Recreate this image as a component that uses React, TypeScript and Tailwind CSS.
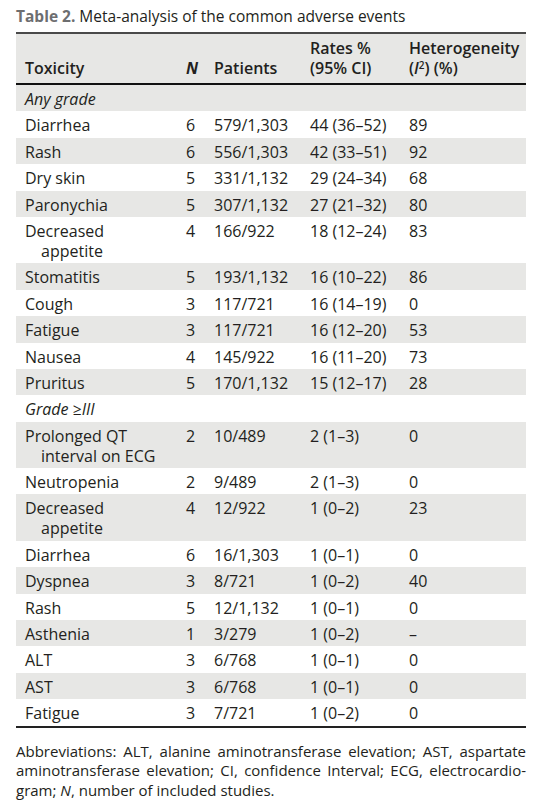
const font = { fontFamily: '"Open Sans", "Noto Sans", sans-serif' };

type Row = [string | string[], string, string, string, string];

const anyGrade: Row[] = [
  ['Diarrhea', '6', '579/1,303', '44 (36–52)', '89'],
  ['Rash', '6', '556/1,303', '42 (33–51)', '92'],
  ['Dry skin', '5', '331/1,132', '29 (24–34)', '68'],
  ['Paronychia', '5', '307/1,132', '27 (21–32)', '80'],
  [['Decreased', 'appetite'], '4', '166/922', '18 (12–24)', '83'],
  ['Stomatitis', '5', '193/1,132', '16 (10–22)', '86'],
  ['Cough', '3', '117/721', '16 (14–19)', '0'],
  ['Fatigue', '3', '117/721', '16 (12–20)', '53'],
  ['Nausea', '4', '145/922', '16 (11–20)', '73'],
  ['Pruritus', '5', '170/1,132', '15 (12–17)', '28'],
];

const gradeThree: Row[] = [
  [['Prolonged QT', 'interval on ECG'], '2', '10/489', '2 (1–3)', '0'],
  ['Neutropenia', '2', '9/489', '2 (1–3)', '0'],
  [['Decreased', 'appetite'], '4', '12/922', '1 (0–2)', '23'],
  ['Diarrhea', '6', '16/1,303', '1 (0–1)', '0'],
  ['Dyspnea', '3', '8/721', '1 (0–2)', '40'],
  ['Rash', '5', '12/1,132', '1 (0–1)', '0'],
  ['Asthenia', '1', '3/279', '1 (0–2)', '–'],
  ['ALT', '3', '6/768', '1 (0–1)', '0'],
  ['AST', '3', '6/768', '1 (0–1)', '0'],
  ['Fatigue', '3', '7/721', '1 (0–2)', '0'],
];

const cols = 'grid grid-cols-[162px_28px_96px_99px_1fr]';

function GroupRow({ label, shaded }: { label: string; shaded: boolean }) {
  return (
    <div className={`${shaded ? 'bg-[#e7e7e5]' : 'bg-white'} pl-[9px] pt-[4px] pb-[2.4px] italic`}>{label}</div>
  );
}

function DataRow({ row, shaded }: { row: Row; shaded: boolean }) {
  const [name, n, patients, rate, het] = row;
  return (
    <div className={`${cols} ${shaded ? 'bg-[#e7e7e5]' : 'bg-white'} pt-[4px] pb-[2.4px]`}>
      <div className="pl-[9px]">
        {Array.isArray(name) ? (
          <>
            <div>{name[0]}</div>
            <div className="pl-4">{name[1]}</div>
          </>
        ) : (
          name
        )}
      </div>
      <div className="px-2">{n}</div>
      <div className="px-2">{patients}</div>
      <div className="px-2">{rate}</div>
      <div className="pl-2">{het}</div>
    </div>
  );
}

export default function App() {
  let i = 0;
  const rows: React.ReactNode[] = [];
  rows.push(<GroupRow key="g1" label="Any grade" shaded={i++ % 2 === 0} />);
  anyGrade.forEach((r, k) => rows.push(<DataRow key={`a${k}`} row={r} shaded={i++ % 2 === 0} />));
  rows.push(<GroupRow key="g2" label="Grade ≥III" shaded={i++ % 2 === 0} />);
  gradeThree.forEach((r, k) => rows.push(<DataRow key={`b${k}`} row={r} shaded={i++ % 2 === 0} />));

  return (
    <div className="w-[542px] h-[802px] bg-white text-[#231f20] px-4 pt-[5px]" style={font}>
      <div className="text-[15.5px] leading-[22px] mb-[5px]">
        <span className="font-bold text-[#6d6e70]">Table 2.</span> Meta-analysis of the common adverse events
      </div>

      <div className="text-[16px] leading-5">
        <div className="border-t-2 border-[#4a4a4a]" />
        <div className={`${cols} bg-[#e7e7e5] font-semibold pt-[4px] pb-[5px] items-end`}>
          <div className="pl-[9px]">Toxicity</div>
          <div className="px-2 italic font-bold">N</div>
          <div className="px-2">Patients</div>
          <div className="px-2">
            Rates %
            <br />
            (95% CI)
          </div>
          <div className="pl-2">
            Heterogeneity
            <br />
            (<span className="italic">I</span>
            <sup className="text-[10px]">2</sup>) (%)
          </div>
        </div>
        <div className="border-t-2 border-[#111]" />
        {rows}
        <div className="border-t-2 border-[#222]" />
      </div>

      <div className="mt-[14px] text-[15px] leading-[19.5px]">
        <div className="text-justify [text-align-last:justify]">
          Abbreviations: ALT, alanine aminotransferase elevation; AST, aspartate
        </div>
        <div className="text-justify [text-align-last:justify]">
          aminotransferase elevation; CI, confidence Interval; ECG, electrocardio-
        </div>
        <div>
          gram; <span className="italic">N</span>, number of included studies.
        </div>
      </div>
    </div>
  );
}
